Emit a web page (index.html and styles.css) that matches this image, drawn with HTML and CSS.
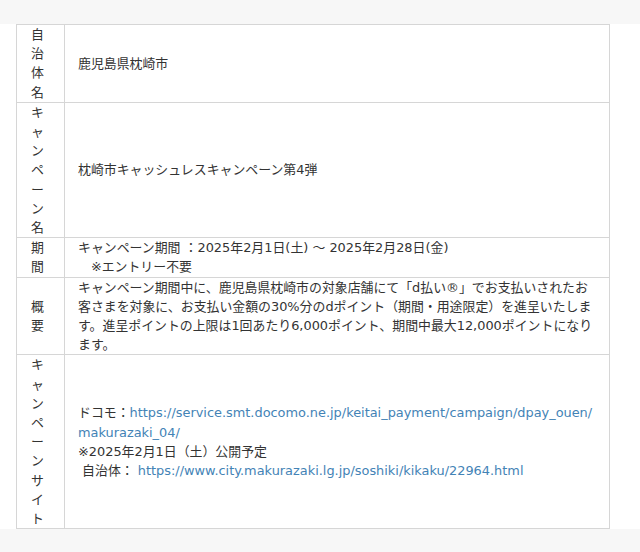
FILE: index.html
```
<!doctype html>
<html lang="ja">
	<head>
		<meta charset="utf-8">
		<title>枕崎市キャッシュレスキャンペーン第4弾</title>
		<link rel="stylesheet" href="styles.css">
	</head>
	<body>
		<div class="band"></div>
		<div class="content">
			<table class="campaign">
				<tr>
					<th>自治体名</th>
					<td>鹿児島県枕崎市</td>
				</tr>
				<tr>
					<th>キャンペーン名</th>
					<td>枕崎市キャッシュレスキャンペーン第4弾</td>
				</tr>
				<tr>
					<th>期間</th>
					<td>キャンペーン期間 ：2025年2月1日(土) ～ 2025年2月28日(金)<br>　※エントリー不要</td>
				</tr>
				<tr>
					<th>概要</th>
					<td>キャンペーン期間中に、鹿児島県枕崎市の対象店舗にて「d払い®」でお支払いされたお客さまを対象に、お支払い金額の30%分のdポイント（期間・用途限定）を進呈いたします。進呈ポイントの上限は1回あたり6,000ポイント、期間中最大12,000ポイントになります。</td>
				</tr>
				<tr>
					<th>キャンペーンサイト</th>
					<td>ドコモ：<a href="#">https://service.smt.docomo.ne.jp/keitai_payment/campaign/dpay_ouen/makurazaki_04/</a><br>※2025年2月1日（土）公開予定<br>&nbsp;自治体：&nbsp;<a href="#">https://www.city.makurazaki.lg.jp/soshiki/kikaku/22964.html</a></td>
				</tr>
			</table>
		</div>
		<div class="band bottom"></div>
	</body>
</html>
```

FILE: styles.css
```
body {
	margin: 0;
	background: #fff;
	color: #333;
	font-family: "DejaVu Sans", "Noto Sans CJK JP", sans-serif;
	font-size: 12.9px;
	line-height: 19.2px;
}
.band {
	height: 24px;
	background: #f7f7f7;
}
.band.bottom {
	height: 25px;
}
.content {
	padding: 0 16px;
}
.campaign {
	width: 594px;
	border-collapse: collapse;
	table-layout: fixed;
}
.campaign th, .campaign td {
	border: 1px solid #d6d6d6;
	padding: 0 13px;
	vertical-align: middle;
	text-align: left;
	font-weight: normal;
}
.campaign th {
	width: 20px;
	padding: 0 13px 0 14px;
}
.campaign a {
	color: #4383b6;
	text-decoration: none;
	word-break: break-all;
}
```
